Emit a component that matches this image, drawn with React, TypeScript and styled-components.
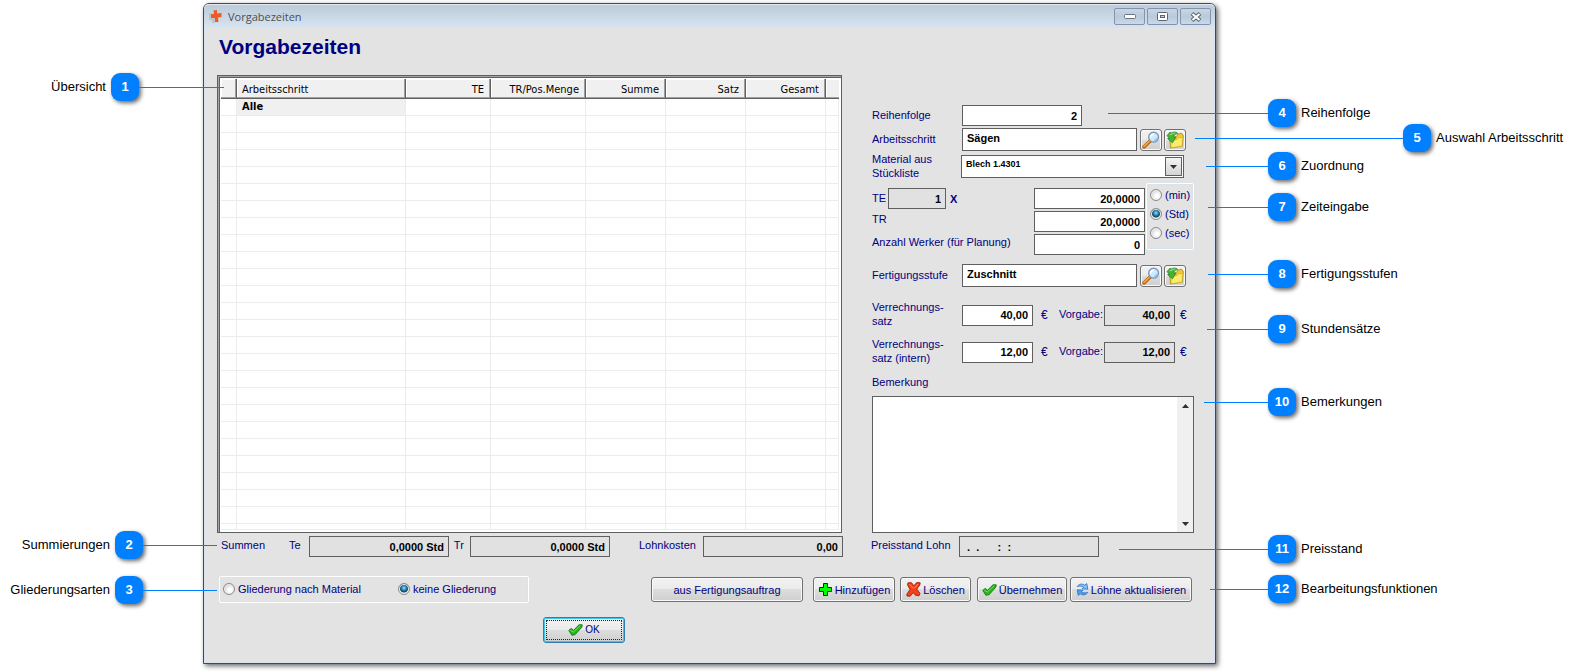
import React from "react";
import styled, { createGlobalStyle } from "styled-components";

const navy = "#000080";
const face = "#e3e3e3";
const edge = "#5f5f5f";
const blue = "#0080ff";
const ui = `"Liberation Sans", Arial, sans-serif`;
const tahoma = `"DejaVu Sans Condensed", Tahoma, sans-serif`;

const GlobalStyle = createGlobalStyle`
  *, *::before, *::after { box-sizing: border-box; }
  body { margin: 0; background: #fff; font: 11px/14px ${ui}; color: ${navy}; }
  input, select, textarea, button { font: inherit; margin: 0; border-radius: 0; }
`;

const Page = styled.main`
  padding: 3px 365px 8px 203px;
`;

const Dialog = styled.section`
  position: relative;
  min-width: 1000px;
  background: ${face};
  border: 1px solid #46484a;
  border-radius: 6px 6px 0 0;
  box-shadow: inset 1px 0 #d6e2f2, inset -1px -1px #d6e2f2, 2px 2px 5px rgba(0, 0, 0, 0.6);
`;

const TitleBar = styled.header`
  display: flex;
  align-items: center;
  gap: 5px;
  height: 24px;
  padding: 0 4px;
  border-radius: 5px 5px 0 0;
  border-top: 1px solid #e3ebf3;
  background: linear-gradient(#bccbd9, #c6d4e2 35%, #d7e4f2);
  color: #4d4f52;
  font: 11px/16px "Open Sans", "Noto Sans", sans-serif;
`;

const WindowButtons = styled.div`
  display: flex;
  gap: 2px;
  margin-left: auto;
`;

const WindowButton = styled.button`
  display: grid;
  place-items: center;
  width: 31px;
  height: 17px;
  padding: 0;
  border: 1px solid #8492ae;
  border-radius: 2px;
  background: linear-gradient(#c9d7e4, #b9cadb 50%, #cbd9e8);
`;

const Body = styled.div`
  padding: 6px 21px 20px 13px;
`;

const Heading = styled.h1`
  margin: 0 0 15px 2px;
  font: bold 21px/26px ${ui};
`;

const Columns = styled.div`
  display: grid;
  grid-template-columns: minmax(0, 1fr) 322px;
  column-gap: 30px;
`;

const TableFrame = styled.div`
  border: 1px solid ${edge};
  box-shadow: inset 1px 1px #a5a5a5, inset 2px 2px ${edge};
  padding: 3px 2px 2px 3px;
  background: #fff;
`;

const Table = styled.table`
  width: 100%;
  table-layout: fixed;
  border-collapse: separate;
  border-spacing: 0;
  color: #000;
  font: 11px/14px ${tahoma};
`;

const HeadCell = styled.th<{ $right?: boolean }>`
  height: 20px;
  padding: 3px 6px 0 5px;
  border-right: 1px solid #606060;
  border-bottom: 1px solid #606060;
  background: #f0f0f0;
  box-shadow: inset -1px -1px #a0a0a0, inset 1px 1px #fff;
  font-weight: normal;
  text-align: ${(p) => (p.$right ? "right" : "left")};
  white-space: nowrap;
  &:last-child { border-right: 0; box-shadow: inset 0 -1px #a0a0a0, inset 1px 1px #fff; }
`;

const BodyCell = styled.td<{ $fill?: boolean; $short?: boolean }>`
  height: ${(p) => (p.$short ? 6 : 17)}px;
  padding: 0 5px;
  border-right: 1px solid #ececec;
  border-bottom: 1px solid #ececec;
  background: ${(p) => (p.$fill ? "#f0f0f0" : "#fff")};
  font-weight: bold;
`;

const Form = styled.form`
  display: flex;
  flex-direction: column;
  padding-top: 30px;
`;

const Row = styled.div<{ $h: number; $top?: number }>`
  display: flex;
  align-items: center;
  height: ${(p) => p.$h}px;
  margin-top: ${(p) => p.$top ?? 0}px;
`;

const Label = styled.label<{ $w?: number }>`
  flex: none;
  width: ${(p) => (p.$w ? `${p.$w}px` : "auto")};
  padding-bottom: 2px;
  white-space: nowrap;
`;

const RaisedLabel = styled(Label)`
  padding-bottom: 6px;
`;

const SumLabel = styled(Label)`
  padding-bottom: 4px;
`;

const Field = styled.input<{ $w: number; $left?: boolean; $flat?: boolean; $tall?: boolean }>`
  flex: none;
  width: ${(p) => p.$w}px;
  height: ${(p) => (p.$tall ? 23 : 21)}px;
  padding: ${(p) => (p.$tall ? "0 4px 3px" : "0 4px")};
  border: 1px solid ${edge};
  outline: 0;
  background: ${(p) => (p.$flat ? "#e1e1e1" : "#fff")};
  color: #000;
  font-weight: bold;
  text-align: ${(p) => (p.$left ? "left" : "right")};
`;

const SelectWrap = styled.div`
  position: relative;
  width: 223px;
  margin-left: -1px;
`;

const Select = styled.select`
  appearance: none;
  display: block;
  width: 100%;
  height: 23px;
  padding: 0 24px 6px 4px;
  border: 1px solid ${edge};
  background: #fff;
  color: #000;
  font: bold 9px/12px ${ui};
`;

const SelectArrow = styled.span`
  position: absolute;
  top: 2px;
  right: 2px;
  display: grid;
  place-items: center;
  width: 17px;
  height: 19px;
  border: 1px solid ${edge};
  background: linear-gradient(#f4f4f4, #d4d4d4);
  pointer-events: none;
`;

const Push = styled.button<{ $w: number; $h?: number; $gap?: number }>`
  flex: none;
  display: flex;
  align-items: center;
  justify-content: center;
  gap: 2px;
  width: ${(p) => p.$w}px;
  height: ${(p) => p.$h ?? 25}px;
  margin-left: ${(p) => p.$gap ?? 0}px;
  padding: 0;
  border: 1px solid #707070;
  border-radius: 3px;
  box-shadow: inset 0 0 0 1px #fafafa;
  background: linear-gradient(#f2f2f2, #ebebeb 48%, #dddddd 50%, #cfcfcf);
  color: ${navy};
  white-space: nowrap;
`;

const DefaultPush = styled(Push)`
  border-color: #2c7fb0;
  box-shadow: inset 0 0 0 1px #3fc4ec;
  padding: 2px;
  font-size: 10px;
`;

const FocusRing = styled.span`
  flex: 1;
  display: flex;
  align-items: center;
  justify-content: center;
  gap: 2px;
  height: 20px;
  border: 1px dotted #222;
`;

const TimeBlock = styled.div`
  display: flex;
  align-items: flex-start;
  justify-content: space-between;
  margin-top: 5px;
`;

const TimeFields = styled.div`
  display: flex;
  flex-direction: column;
  gap: 2px;
  width: 273px;
  padding-top: 5px;
`;

const TimeRow = styled.div`
  display: flex;
  align-items: center;
  height: 21px;
  ${Field}:last-child { margin-left: auto; }
`;

const Group = styled.fieldset`
  min-width: 0;
  margin: 0;
  border: 1px solid #fff;
  border-radius: 2px;
  outline: 1px solid #dbe3ea;
  outline-offset: -2px;
`;

const UnitGroup = styled(Group)`
  display: flex;
  flex-direction: column;
  gap: 5px;
  width: 48px;
  height: 67px;
  padding: 4px 0 0 3px;
`;

const LayoutGroup = styled(Group)`
  display: flex;
  align-items: center;
  width: 310px;
  height: 27px;
  margin-left: 2px;
  padding: 0 3px 2px;
`;

const Choice = styled.label<{ $w?: number }>`
  display: flex;
  align-items: center;
  gap: 3px;
  width: ${(p) => (p.$w ? `${p.$w}px` : "auto")};
  white-space: nowrap;
`;

const Radio = styled.input`
  appearance: none;
  flex: none;
  width: 12px;
  height: 12px;
  border: 1px solid #8a8a8a;
  border-radius: 50%;
  background: radial-gradient(circle at 60% 60%, #fff 20%, #cfcfcf 75%);
  box-shadow: inset 0 0 0 1px #f2f2f2;
  &:checked {
    background: radial-gradient(circle at 5px 4px, #a8e4fa 0, #2f8fbc 2px, #10405f 4px, #dfe4e7 5px);
  }
`;

const Memo = styled.div`
  display: flex;
  height: 137px;
  margin-top: 6px;
  border: 1px solid ${edge};
  background: #fff;
`;

const MemoText = styled.textarea`
  flex: 1;
  padding: 3px;
  border: 0;
  outline: 0;
  resize: none;
  overflow: hidden;
  background: transparent;
  font-weight: bold;
`;

const Scroller = styled.div`
  display: flex;
  flex-direction: column;
  align-items: center;
  justify-content: space-between;
  width: 16px;
  padding: 7px 0 6px;
  background: #f0f0f0;
`;

const Sums = styled.div`
  display: flex;
  align-items: center;
  padding-left: 4px;
  margin-right: -1px;
  margin-top: 3px;
`;

const PriceDate = styled.div`
  display: flex;
  align-items: center;
  margin: 3px 0 0 -1px;
`;

const Spacer = styled.div`
  flex: 1;
`;

const Actions = styled.div`
  display: flex;
  align-items: center;
  margin-top: 19px;
  padding-right: 2px;
`;

const Confirm = styled.div`
  margin: 14px 0 0 326px;
`;

const Callout = styled.div<{ $y: number; $side: "left" | "right"; $inset: number }>`
  position: absolute;
  top: ${(p) => p.$y - 18}px;
  ${(p) => (p.$side === "right" ? "left" : "right")}: calc(100% - ${(p) => p.$inset}px);
  display: flex;
  flex-direction: ${(p) => (p.$side === "right" ? "row" : "row-reverse")};
  align-items: center;
  color: #000;
  font: 13px/16px ${ui};
  white-space: nowrap;
`;

const Lead = styled.span<{ $w: number }>`
  width: ${(p) => p.$w}px;
  height: 1px;
  background: ${blue};
`;

const Badge = styled.span<{ $side: "left" | "right" }>`
  width: 28px;
  height: 28px;
  margin-${(p) => (p.$side === "right" ? "right" : "left")}: 5px;
  border-radius: 9px;
  background: ${blue};
  box-shadow: 2px 2px 4px rgba(0, 0, 0, 0.6);
  color: #fff;
  font-weight: bold;
  line-height: 28px;
  text-align: center;
`;

const Euro = styled.span<{ $w?: number }>`
  flex: none;
  width: ${(p) => (p.$w ? `${p.$w}px` : "auto")};
  padding-left: ${(p) => (p.$w ? 8 : 5)}px;
  font-size: 12px;
`;

const Times = styled.span`
  padding-left: 4px;
  font-weight: bold;
`;

const Magnifier = () => (
  <svg width="18" height="18" viewBox="0 0 18 18">
    <path d="M2 16 8 10" stroke="#a85a10" strokeWidth="3.4" strokeLinecap="round" />
    <path d="M2 15.6 7.6 10" stroke="#f6a13a" strokeWidth="1.8" strokeLinecap="round" />
    <circle cx="11.6" cy="6.2" r="4.9" fill="#cfeafb" stroke="#7d97bd" strokeWidth="1.4" />
    <path d="M8.6 6.4a3.2 3.2 0 0 1 3.4-3.2" stroke="#fff" strokeWidth="1.6" fill="none" />
    <path d="M14.8 6.8a3.2 3.2 0 0 1-3 2.8" stroke="#8cc8f0" strokeWidth="1.4" fill="none" />
  </svg>
);

const FolderArrow = () => (
  <svg width="18" height="18" viewBox="0 0 18 18">
    <path d="M3.500 7 10.500 5.500 12 3l3.800-.8.8 1.800.8.400L16.400 15 4.600 17z" fill="#efc92e" stroke="#a88a1a" strokeWidth=".8" />
    <path d="m5.200 16.800-.4-7.600 6.200-.7 1-1.500 4.400-.6-.3 8.600z" fill="#fdeb6c" stroke="#d0ad2a" strokeWidth=".6" />
    <path d="M1 4.600 4.200 1l.6 1.400C7.400.4 10.800.8 11.800 2.600 9 2.600 7.800 4.200 8 6.400l2-.2-3.600 5.600L1.600 7.600l1.800-.2z" fill="#43b532" stroke="#1f7d1c" strokeWidth=".7" />
    <path d="M3.600 3.200 5 3.800C6.200 2.400 8 1.800 9.400 2" stroke="#a4e88a" strokeWidth="1" fill="none" />
  </svg>
);

const Check = () => (
  <svg width="15" height="12" viewBox="0 0 15 12">
    <path d="M.8 6.400 3.200 4.400 5.600 6.200 11 .8h3.200L14 3 7 10.800 3.800 11.200z" fill="#27b51c" stroke="#167a14" strokeWidth=".9" strokeLinejoin="round" />
    <path d="M2.400 6.400 5.400 8 12.200 1.800" stroke="#7fe068" strokeWidth=".9" fill="none" />
  </svg>
);

const Plus = () => (
  <svg width="15" height="15" viewBox="0 0 15 15">
    <path d="M5.500 1.500h4v4h4v4h-4v4h-4v-4h-4v-4h4z" fill="#0f0" stroke="#043004" />
  </svg>
);

const Cross = () => (
  <svg width="15" height="15" viewBox="0 0 15 15">
    <path d="M2 .8 5.600.8 7.800 3.800 10.600.6 14.200.8 13.800 3 10.800 7 14 11.400 13 13.800 9.400 13.200 7.200 10.600 4.200 14.200 1 14 .8 12.400 4 7.400 1.600 3z" fill="#f3401c" stroke="#a01c08" strokeWidth=".9" strokeLinejoin="round" />
    <path d="M3.400 2.200 7.600 6.400M12 2 8.600 6" stroke="#ff9a78" strokeWidth=".9" />
  </svg>
);

const Refresh = () => (
  <svg width="13" height="13" viewBox="0 0 13 13">
    <path d="M1.200 3.600C3 1 6 .2 8.800 2.200L10.800.6l1 5.600-5.800-.4L7.600 4.200C6 3 4.400 2.800 1.200 3.600z" fill="#7cc4fa" stroke="#2a6fc0" strokeWidth=".8" />
    <path d="M11.800 9.400C10 12 7 12.800 4.200 10.800L2.200 12.400l-1-5.600 5.800.4L5.400 8.800c1.600 1.200 3.200 1.400 6.400.6z" fill="#4aa2f0" stroke="#2a6fc0" strokeWidth=".8" />
  </svg>
);

const AppIcon = () => (
  <svg width="15" height="15" viewBox="0 0 15 15">
    <path d="M1 4h3v2h3v8H4v-3H1z" fill="#bfc3c8" />
    <path d="M5.500 1.500 9 1v3.500l4.500-.5v4l-3.500.5L10.500 13H7V9H3V5h3z" fill="#ee5a24" />
  </svg>
);

const Arrow = ({ up }: { up?: boolean }) => (
  <svg width="7" height="4" viewBox="0 0 7 4">
    <path d={up ? "M0 4 3.500 0 7 4z" : "M0 0h7L3.500 4z"} fill="#303030" />
  </svg>
);

const LookupButtons = ({ name }: { name: string }) => (
  <>
    <Push type="button" $w={22} $h={22} $gap={3} aria-label={`${name} suchen`}><Magnifier /></Push>
    <Push type="button" $w={22} $h={22} $gap={2} aria-label={`${name} übernehmen`}><FolderArrow /></Push>
  </>
);

const columns = [
  { title: "", width: 16 },
  { title: "Arbeitsschritt" },
  { title: "TE", width: 85 },
  { title: "TR/Pos.Menge", width: 95 },
  { title: "Summe", width: 80 },
  { title: "Satz", width: 80 },
  { title: "Gesamt", width: 80 },
  { title: "", width: 13 },
];

const rows = Array.from({ length: 26 }, (_, i) => (i === 0 ? "Alle" : ""));

const StepTable = () => (
  <TableFrame>
    <Table>
      <colgroup>
        {columns.map((c, i) => <col key={i} width={c.width} />)}
      </colgroup>
      <thead>
        <tr>{columns.map((c, i) => <HeadCell key={i} $right={i > 1}>{c.title}</HeadCell>)}</tr>
      </thead>
      <tbody>
        {rows.map((name, r) => (
          <tr key={r}>
            {columns.map((_, i) => (
              <BodyCell key={i} $fill={r === 0 && i === 1} $short={r === rows.length - 1}>
                {i === 1 ? name : ""}
              </BodyCell>
            ))}
          </tr>
        ))}
      </tbody>
    </Table>
  </TableFrame>
);

const RateRow = ({ id, suffix, value, top }: { id: string; suffix: string; value: string; top: number }) => (
  <Row $h={28} $top={top}>
    <Label $w={90} htmlFor={id}>Verrechnungs-<br />{suffix}</Label>
    <Field id={id} $w={71} defaultValue={value} />
    <Euro $w={26}>€</Euro>
    <Label $w={45} htmlFor={`${id}-default`}>Vorgabe:</Label>
    <Field id={`${id}-default`} $w={71} $flat readOnly value={value} />
    <Euro>€</Euro>
  </Row>
);

const StepForm = () => (
  <Form onSubmit={(e) => e.preventDefault()}>
    <Row $h={21}>
      <Label $w={90} htmlFor="order">Reihenfolge</Label>
      <Field id="order" $w={120} defaultValue="2" />
    </Row>
    <Row $h={23} $top={2}>
      <Label $w={90} htmlFor="step">Arbeitsschritt</Label>
      <Field id="step" $w={175} $left $tall defaultValue="Sägen" />
      <LookupButtons name="Arbeitsschritt" />
    </Row>
    <Row $h={23} $top={4}>
      <Label $w={90} htmlFor="material">Material aus<br />Stückliste</Label>
      <SelectWrap>
        <Select id="material" defaultValue="Blech 1.4301"><option>Blech 1.4301</option></Select>
        <SelectArrow><Arrow /></SelectArrow>
      </SelectWrap>
    </Row>
    <TimeBlock>
      <TimeFields>
        <TimeRow>
          <Label $w={16} htmlFor="te">TE</Label>
          <Field id="te-count" aria-label="TE" $w={58} $flat readOnly value="1" />
          <Times>X</Times>
          <Field id="te" $w={111} defaultValue="20,0000" />
        </TimeRow>
        <TimeRow>
          <RaisedLabel htmlFor="tr">TR</RaisedLabel>
          <Field id="tr" $w={111} defaultValue="20,0000" />
        </TimeRow>
        <TimeRow>
          <RaisedLabel htmlFor="workers">Anzahl Werker (für Planung)</RaisedLabel>
          <Field id="workers" $w={111} defaultValue="0" />
        </TimeRow>
      </TimeFields>
      <UnitGroup>
        <Choice><Radio type="radio" name="unit" />(min)</Choice>
        <Choice><Radio type="radio" name="unit" defaultChecked />(Std)</Choice>
        <Choice><Radio type="radio" name="unit" />(sec)</Choice>
      </UnitGroup>
    </TimeBlock>
    <Row $h={23} $top={9}>
      <Label $w={90} htmlFor="stage">Fertigungsstufe</Label>
      <Field id="stage" $w={175} $left $tall defaultValue="Zuschnitt" />
      <LookupButtons name="Fertigungsstufe" />
    </Row>
    <RateRow id="rate" suffix="satz" value="40,00" top={14} />
    <RateRow id="rate-internal" suffix="satz (intern)" value="12,00" top={9} />
    <Row $h={14} $top={10}><Label htmlFor="note">Bemerkung</Label></Row>
    <Memo>
      <MemoText id="note" />
      <Scroller><Arrow up /><Arrow /></Scroller>
    </Memo>
  </Form>
);

type Mark = { n: number; text: string; side: "left" | "right"; y: number; inset: number; lead: number };

const marks: Mark[] = [
  { n: 1, text: "Übersicht", side: "left", y: 87, inset: 20, lead: 85 },
  { n: 2, text: "Summierungen", side: "left", y: 545, inset: 13, lead: 74 },
  { n: 3, text: "Gliederungsarten", side: "left", y: 590, inset: 13, lead: 74 },
  { n: 4, text: "Reihenfolge", side: "right", y: 113, inset: 107, lead: 160 },
  { n: 5, text: "Auswahl Arbeitsschritt", side: "right", y: 138, inset: 20, lead: 208 },
  { n: 6, text: "Zuordnung", side: "right", y: 166, inset: 9, lead: 62 },
  { n: 7, text: "Zeiteingabe", side: "right", y: 207, inset: 7, lead: 60 },
  { n: 8, text: "Fertigungsstufen", side: "right", y: 274, inset: 7, lead: 60 },
  { n: 9, text: "Stundensätze", side: "right", y: 329, inset: 8, lead: 61 },
  { n: 10, text: "Bemerkungen", side: "right", y: 402, inset: 11, lead: 64 },
  { n: 11, text: "Preisstand", side: "right", y: 549, inset: 96, lead: 149 },
  { n: 12, text: "Bearbeitungsfunktionen", side: "right", y: 589, inset: 5, lead: 58 },
];

export default function App() {
  return (
    <Page>
      <GlobalStyle />
      <Dialog>
        <TitleBar>
          <AppIcon />
          Vorgabezeiten
          <WindowButtons>
            <WindowButton aria-label="Minimieren">
              <svg width="12" height="5" viewBox="0 0 12 5"><rect x=".5" y=".5" width="11" height="4" rx="1" fill="#fff" stroke="#6b7280" /></svg>
            </WindowButton>
            <WindowButton aria-label="Maximieren">
              <svg width="11" height="9" viewBox="0 0 11 9"><rect x=".5" y=".5" width="10" height="8" rx="1" fill="#fff" stroke="#5d6570" /><rect x="3.500" y="3.500" width="4" height="2" fill="#c2d0de" stroke="#5d6570" /></svg>
            </WindowButton>
            <WindowButton aria-label="Schließen">
              <svg width="12" height="10" viewBox="0 0 12 10"><path d="M2 1.500 10 8.500M10 1.500 2 8.500" stroke="#5d6570" strokeWidth="4" /><path d="M2.500 2 9.500 8M9.500 2 2.500 8" stroke="#fff" strokeWidth="2" /></svg>
            </WindowButton>
          </WindowButtons>
        </TitleBar>
        <Body>
          <Heading>Vorgabezeiten</Heading>
          <Columns>
            <StepTable />
            <StepForm />
            <Sums>
              <SumLabel $w={68} as="span">Summen</SumLabel>
              <SumLabel $w={20} htmlFor="sum-te">Te</SumLabel>
              <Field id="sum-te" $w={140} $flat readOnly value="0,0000 Std" />
              <Spacer />
              <SumLabel $w={16} htmlFor="sum-tr">Tr</SumLabel>
              <Field id="sum-tr" $w={140} $flat readOnly value="0,0000 Std" />
              <WideSpacer />
              <SumLabel $w={64} htmlFor="cost">Lohnkosten</SumLabel>
              <Field id="cost" $w={140} $flat readOnly value="0,00" />
            </Sums>
            <PriceDate>
              <SumLabel $w={88} htmlFor="price-date">Preisstand Lohn</SumLabel>
              <Field id="price-date" $w={140} $flat $left readOnly value=" .  .      :  :" />
            </PriceDate>
          </Columns>
          <Actions>
            <LayoutGroup>
              <Choice $w={175}><Radio type="radio" name="layout" />Gliederung nach Material</Choice>
              <Choice><Radio type="radio" name="layout" defaultChecked />keine Gliederung</Choice>
            </LayoutGroup>
            <Spacer />
            <Push type="button" $w={152}>aus Fertigungsauftrag</Push>
            <Push type="button" $w={82} $gap={10}><Plus />Hinzufügen</Push>
            <Push type="button" $w={71} $gap={5}><Cross />Löschen</Push>
            <Push type="button" $w={90} $gap={6}><Check />Übernehmen</Push>
            <Push type="button" $w={122} $gap={3}><Refresh />Löhne aktualisieren</Push>
          </Actions>
          <Confirm>
            <DefaultPush type="button" $w={82} $h={26}><FocusRing><Check />OK</FocusRing></DefaultPush>
          </Confirm>
        </Body>
        {marks.map((m) => (
          <Callout key={m.n} $y={m.y} $side={m.side} $inset={m.inset}>
            <Lead $w={m.lead} />
            <Badge $side={m.side}>{m.n}</Badge>
            <span>{m.text}</span>
          </Callout>
        ))}
      </Dialog>
    </Page>
  );
}

const WideSpacer = styled(Spacer)`
  flex: 6;
`;
